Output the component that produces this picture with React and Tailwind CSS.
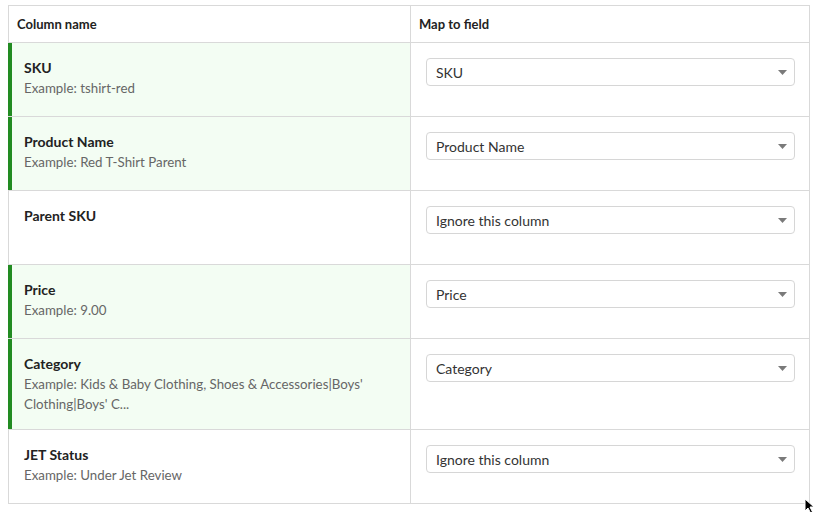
import React from 'react';

const rows = [
  { name: 'SKU', example: 'tshirt-red', field: 'SKU', mapped: true },
  { name: 'Product Name', example: 'Red T-Shirt Parent', field: 'Product Name', mapped: true },
  { name: 'Parent SKU', example: null, field: 'Ignore this column', mapped: false },
  { name: 'Price', example: '9.00', field: 'Price', mapped: true },
  {
    name: 'Category',
    example: "Kids & Baby Clothing, Shoes & Accessories|Boys' Clothing|Boys' C...",
    field: 'Category',
    mapped: true,
  },
  { name: 'JET Status', example: 'Under Jet Review', field: 'Ignore this column', mapped: false },
];

function Select({ value }) {
  return (
    <div className="h-[28px] flex items-center justify-between pl-[9px] pr-[7px] border border-[#d6d6d6] rounded-[4px] bg-white text-[14px] text-[#333]">
      <span>{value}</span>
      <svg width="9" height="5" viewBox="0 0 9 5">
        <path d="M0 0 H9 L4.5 5 Z" fill="#7a7a7a" />
      </svg>
    </div>
  );
}

export default function App() {
  return (
    <div
      className="relative min-h-[512px] bg-white pt-[5px] pl-2"
      style={{ fontFamily: 'Lato, "Liberation Sans", sans-serif' }}
    >
      <div className="w-[802px] border-r border-b border-t border-[#d9d9d9]">
        {/* header */}
        <div className="flex text-[13px] font-bold text-[#222]">
          <div className="w-[403px] border-l border-r border-[#d9d9d9] pl-2 py-[9px] leading-[18px]">
            Column name
          </div>
          <div className="flex-1 pl-2 py-[9px] leading-[18px]">Map to field</div>
        </div>

        {rows.map((r) => (
          <div key={r.name} className="flex border-t border-[#d9d9d9]">
            <div
              className={
                r.mapped
                  ? 'w-[403px] min-h-[73px] border-l-4 border-l-[#228b22] bg-[#f3fdf3] border-r border-r-[#d9d9d9] pl-3 pr-3 py-[15px]'
                  : 'w-[403px] min-h-[73px] border-l border-l-[#d9d9d9] bg-white border-r border-r-[#d9d9d9] pl-[15px] pr-3 py-[15px]'
              }
            >
              <div className="text-[14px] leading-[20px] font-bold text-[#222]">{r.name}</div>
              {r.example && (
                <div className="text-[13.3px] leading-[20px] text-[#666]">Example: {r.example}</div>
              )}
            </div>
            <div className="flex-1 pl-[15px] pr-[14px] pt-[15px]">
              <Select value={r.field} />
            </div>
          </div>
        ))}
      </div>

      {/* mouse pointer */}
      <svg className="absolute left-[804px] top-[498px]" width="12" height="16" viewBox="0 0 12 16">
        <path d="M1 1 L1 13 L4 10 L6.5 15 L8.5 14 L6 9 L10 9 Z" fill="#000" stroke="#fff" strokeWidth="1" />
      </svg>
    </div>
  );
}
